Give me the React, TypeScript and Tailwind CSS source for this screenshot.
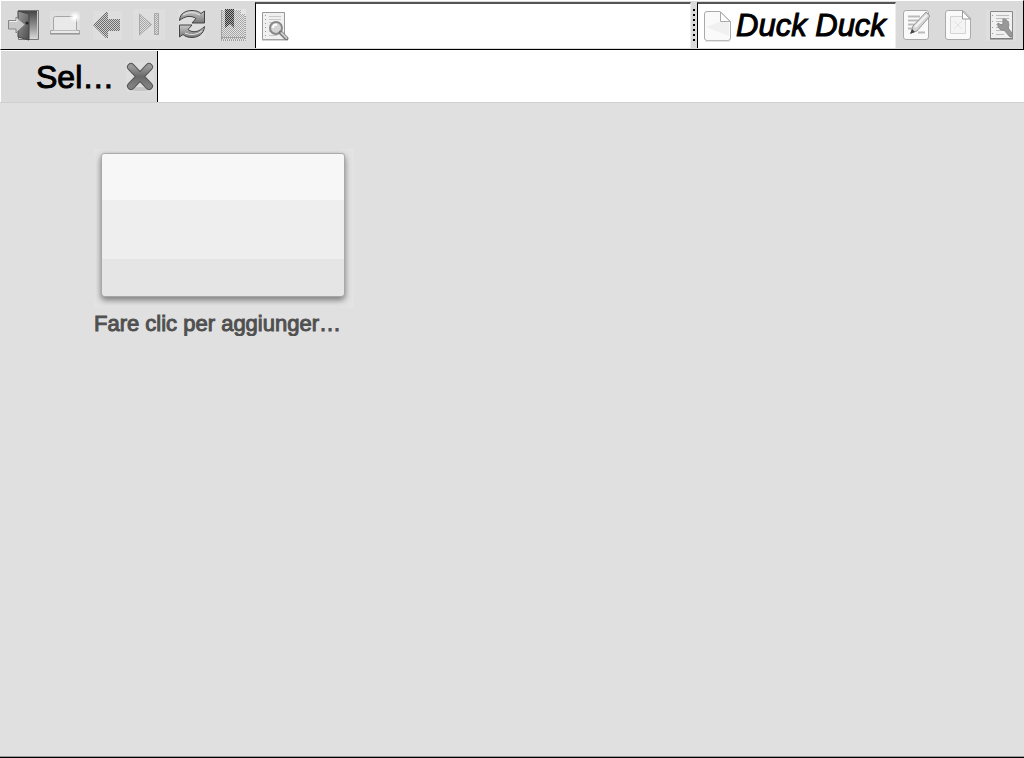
import type { ReactNode } from 'react'

interface IconProps {
  children: ReactNode
}

function Icon({ children }: IconProps) {
  return (
    <svg viewBox="0 0 32 32" className="size-8 shrink-0" fill="none" aria-hidden="true">
      {children}
    </svg>
  )
}

// shared gradients and the halftone used by disabled icons
function Defs() {
  return (
    <svg className="absolute size-0" aria-hidden="true">
      <defs>
        <pattern id="dots" width="2" height="2" patternUnits="userSpaceOnUse">
          <path d="M0 0h1v1H0zM1 1h1v1H1z" fill="#6c6c6c" />
        </pattern>
        <pattern id="dotsLight" width="2" height="2" patternUnits="userSpaceOnUse">
          <path d="M0 0h1v1H0zM1 1h1v1H1z" fill="#a6a6a6" />
        </pattern>
        <pattern id="dotsDark" width="2" height="2" patternUnits="userSpaceOnUse">
          <path d="M0 0h1v1H0zM1 1h1v1H1z" fill="#333" />
        </pattern>
        <linearGradient id="door" x1="0" x2="1" y1="0" y2="1">
          <stop offset="0" stopColor="#9a9a9a" />
          <stop offset="1" stopColor="#4c4c4c" />
        </linearGradient>
        <linearGradient id="hall" x1="0" x2="0" y1="0" y2="1">
          <stop offset="0" stopColor="#444" />
          <stop offset=".6" stopColor="#999" />
          <stop offset="1" stopColor="#ddd" />
        </linearGradient>
        <linearGradient id="metal" x1="0" x2="0" y1="0" y2="1">
          <stop offset="0" stopColor="#c8c8c8" />
          <stop offset="1" stopColor="#777" />
        </linearGradient>
        <linearGradient id="cross" x1="0" x2="0" y1="0" y2="1">
          <stop offset="0" stopColor="#999" />
          <stop offset=".5" stopColor="#6a6a6a" />
          <stop offset="1" stopColor="#808080" />
        </linearGradient>
        <radialGradient id="glow">
          <stop offset=".2" stopColor="#fff" />
          <stop offset="1" stopColor="#fff" stopOpacity="0" />
        </radialGradient>
      </defs>
    </svg>
  )
}

function ExitIcon() {
  return (
    <Icon>
      <path d="M11.5 1.5h20v29h-20z" fill="url(#hall)" stroke="#777" />
      <path d="M30.500 2v28" stroke="#ccc" />
      <path d="M11 2l11 3v26l-11-3z" fill="url(#door)" stroke="#444" />
      <circle cx="20" cy="14" r="1.500" fill="#222" />
      <path d="M1.500 11.500H9V8l9 7.500L9 24v-4H1.500z" fill="#c9c9c9" stroke="#858585" />
      <path d="M2.500 12.500H10v-3" stroke="#eee" />
    </Icon>
  )
}

function NewTabIcon() {
  return (
    <Icon>
      <path d="M1 2h30v25H1z" fill="#dfdfdf" />
      <path d="M4.500 9.500q0-2 2-2h19q2 0 2 2v12h3v3H1.500v-3h3z" fill="#e9e9e9" stroke="#a5a5a5" />
      <path d="M4 21.500h24" stroke="#bbb" />
      <path d="M1 25h30" stroke="#888" />
      <circle cx="26" cy="8" r="6" fill="url(#glow)" />
    </Icon>
  )
}

function BackIcon() {
  return (
    <Icon>
      <path d="M2 2h29v29H2z" fill="#dedede" />
      <path d="M2 16L15 3h2v7h12v12H17v7h-2z" fill="#cfcfcf" />
      <path d="M2 16L15 3h2v7h12v12H17v7h-2z" fill="url(#dots)" />
    </Icon>
  )
}

function SkipIcon() {
  return (
    <Icon>
      <path d="M0 0h32v31H0z" fill="#dedede" />
      <path d="M6.500 5l12 10.500L6.500 26z" fill="url(#dotsLight)" stroke="#a8a8a8" />
      <path d="M21.500 4.500h4v21h-4z" fill="url(#dotsLight)" stroke="#a8a8a8" />
    </Icon>
  )
}

function ReloadIcon() {
  return (
    <Icon>
      <path d="M3 0h27v30H3z" fill="#dedede" />
      <path d="M4.500 11.500C5 4 11 1.500 17 1.500c4 0 7 1 9 3l3.500-2.500v12H17l4-4.500C16 6 10 7 4.500 11.500z" fill="url(#metal)" stroke="#444" strokeLinejoin="round" />
      <path d="M29.500 17.500C29 25 23 28.500 17 28.500c-4 0-7-1-9-3l-3.500 2.500V16H17l-4 4.500c5 4 11 2.500 16.500-3z" fill="url(#metal)" stroke="#444" strokeLinejoin="round" />
      <path d="M8 6q8-5 17 0M27 22q-8 6-17 2" stroke="#e2e2e2" />
    </Icon>
  )
}

function BookmarkIcon() {
  return (
    <Icon>
      <path d="M4 0h25v32H4z" fill="#e4e4e4" />
      <path d="M4 1h20v4h4v26H4z" fill="url(#dotsLight)" />
      <path d="M4.500 1v30.500h24V6" stroke="#999" strokeDasharray="1 1" />
      <path d="M8 0h9v19l-4-4-5 4z" fill="#aaa" />
      <path d="M8 0h9v19l-4-4-5 4z" fill="url(#dotsDark)" />
      <path d="M5 28.500h23" stroke="#999" strokeDasharray="1 1" />
    </Icon>
  )
}

function PageSearchIcon() {
  return (
    <Icon>
      <path d="M4.500 2.500h22v27h-22z" fill="#f0f0f0" stroke="#999" />
      <path d="M4 30h23" stroke="#aaa" />
      <path d="M7.500 5v22" stroke="#999" strokeDasharray="1 3" />
      <path d="M11 6.500h12M11 9.500h12M11 12.500h5M11 15.500h2M11 21.500h2M11 25.500h8" stroke="#c8c8c8" />
      <circle cx="18" cy="18" r="6" fill="#d4d4d4" stroke="#888" strokeWidth="2" />
      <path d="M15 18q0-4 4-3" stroke="#fff" strokeWidth="2" />
      <path d="M22.500 22.500l6 6" stroke="#777" strokeWidth="4" strokeLinecap="round" />
      <path d="M23.500 23l5 5" stroke="#ccc" strokeWidth="2" strokeLinecap="round" />
    </Icon>
  )
}

function PageIcon() {
  return (
    <Icon>
      <path d="M5 1.500h13l10.500 10V28q0 2.500-2.500 2.500H5Q2.500 30.500 2.500 28V4q0-2.500 2.500-2.500z" fill="#fafafa" stroke="#aaa" />
      <path d="M4 17L20 11l7 2v13z" fill="#f0f0f0" />
      <path d="M18.500 2v9.500H28z" fill="#fff" stroke="#aaa" />
      <path d="M3 31h25" stroke="#ccc" />
    </Icon>
  )
}

function EditIcon() {
  return (
    <Icon>
      <path d="M5 1.500h20q2.500 0 2.500 2.500v24q0 2.500-2.500 2.500H5Q2.500 30.500 2.500 28V4q0-2.500 2.500-2.500z" fill="#fafafa" stroke="#aaa" />
      <path d="M7 7.500h12M7 11.500h11M7 15.500h9M7 19.500h5M17 23.500h7" stroke="#bbb" strokeWidth="2" />
      <path d="M10 24l2-7L25 3l4 4-13 15z" fill="#d5d5d5" stroke="#999" />
      <path d="M14 18L26 6" stroke="#f5f5f5" strokeWidth="2" />
      <path d="M9 25l2-5 3 3z" fill="#444" />
    </Icon>
  )
}

function PageBlankIcon() {
  return (
    <Icon>
      <path d="M5 1.500h15l7.500 7.500V28q0 2.500-2.500 2.500H5Q2.500 30.500 2.500 28V4q0-2.500 2.500-2.500z" fill="#fafafa" stroke="#aaa" />
      <path d="M7.500 7.500h15v17h-15z" fill="#f4f4f4" stroke="#d4d4d4" />
      <path d="M11 12l8 8M19 12l-8 8" stroke="#e2e2e2" />
      <path d="M19.500 2v8H27z" fill="#fff" stroke="#999" />
    </Icon>
  )
}

function SettingsIcon() {
  return (
    <Icon>
      <path d="M1 1h30v31H1z" fill="#dedede" />
      <path d="M5.500 2.500h22v27h-22z" fill="#f0f0f0" stroke="#888" />
      <path d="M5 30h23" stroke="#777" />
      <path d="M7.500 6v22" stroke="#999" strokeDasharray="1 5" />
      <path d="M11 6.500h13M11 9.500h13M11 12.500h13M11 15.500h13M11 18.500h13M11 21.500h13M11 25.500h8" stroke="#bcbcbc" />
      <path d="M18 10v5l-2 1-3-2c-1 4 2 8 6 7l6 7h2v-4l-4-5c2-4 0-9-5-9z" fill="#999" stroke="#888" strokeLinejoin="round" />
    </Icon>
  )
}

function CloseIcon() {
  return (
    <Icon>
      <path d="M3 1h28v30H3z" fill="#dedede" />
      <ellipse cx="17" cy="28" rx="10" ry="2" fill="#c5c5c5" />
      <path d="M8 6l18 19M26 6L8 25" stroke="#555" strokeWidth="8" strokeLinecap="round" />
      <path d="M8 6l18 19M26 6L8 25" stroke="url(#cross)" strokeWidth="6" strokeLinecap="round" />
    </Icon>
  )
}

function ToolButton({ label, children }: { label: string; children: ReactNode }) {
  return (
    <button aria-label={label} title={label} className="flex w-[42px] shrink-0 items-center justify-center">
      {children}
    </button>
  )
}

export default function App() {
  return (
    <div className="flex min-h-screen flex-col border-b border-black bg-[#e0e0e0] font-['Liberation_Sans',Arial,sans-serif] text-black">
      <Defs />
      <header className="flex h-[50px] border border-t-white border-r-black border-b-black border-l-white bg-[#dadada]">
        <nav className="flex shrink-0 px-px">
          <ToolButton label="Esci"><ExitIcon /></ToolButton>
          <ToolButton label="Nuova scheda"><NewTabIcon /></ToolButton>
          <ToolButton label="Indietro"><BackIcon /></ToolButton>
          <ToolButton label="Avanti"><SkipIcon /></ToolButton>
          <ToolButton label="Ricarica"><ReloadIcon /></ToolButton>
          <ToolButton label="Segnalibri"><BookmarkIcon /></ToolButton>
        </nav>
        <div className="my-px flex min-w-0 flex-1 items-center border-t-2 border-r border-l border-t-[#555] border-r-[#eee] border-l-black bg-white pl-0.5">
          <PageSearchIcon />
          <input aria-label="Indirizzo" className="h-full min-w-0 flex-1 text-3xl outline-none" />
        </div>
        <div className="flex w-[6px] shrink-0 justify-center py-2">
          <div className="w-0.5 bg-[repeating-linear-gradient(#000_0_2px,transparent_2px_5px)]" />
        </div>
        <div className="my-px flex w-[199px] shrink-0 items-center border-t-2 border-r border-l border-t-[#555] border-r-[#eee] border-l-black bg-white pl-1">
          <PageIcon />
          <input
            aria-label="Cerca"
            placeholder="Duck Duck"
            className="h-full min-w-0 flex-1 pl-0.5 text-[31px] italic outline-none [-webkit-text-stroke:1px_black] placeholder:text-black placeholder:opacity-100"
          />
        </div>
        <div className="flex shrink-0 pr-px">
          <ToolButton label="Modifica"><EditIcon /></ToolButton>
          <ToolButton label="Pagina"><PageBlankIcon /></ToolButton>
          <ToolButton label="Preferenze"><SettingsIcon /></ToolButton>
        </div>
      </header>

      <div className="flex h-[53px] border-b border-[#d0d0d0] bg-white pt-px">
        <div className="flex w-[158px] items-center justify-between border-r border-l border-r-black border-l-white bg-[#dadada] pr-0.5 pl-[35px]">
          <span className="text-[32px] leading-8 [-webkit-text-stroke:1px_black]">Sel…</span>
          <button aria-label="Chiudi scheda"><CloseIcon /></button>
        </div>
      </div>

      <main className="flex-1 border-b border-b-[#999] px-[94px] pt-[46px]">
        <button className="flex w-[260px] flex-col text-left">
          <span className="w-full bg-[#e3e3e3] pt-[5px] pr-[10px] pb-3 pl-2">
            <span className="flex h-[142px] flex-col overflow-hidden rounded-[3px] bg-[#e5e5e5] shadow-[0_0_1px_1px_#aaa,0_3px_6px_1px_#777]">
              <span className="h-[46px] shrink-0 bg-[#f7f7f7]" />
              <span className="h-[59px] shrink-0 bg-[#eee]" />
            </span>
          </span>
          <span className="mt-1 w-full truncate text-[22px] leading-6 text-[#505050] [-webkit-text-stroke:1px_#505050]">
            Fare clic per aggiunger…
          </span>
        </button>
      </main>
    </div>
  )
}
